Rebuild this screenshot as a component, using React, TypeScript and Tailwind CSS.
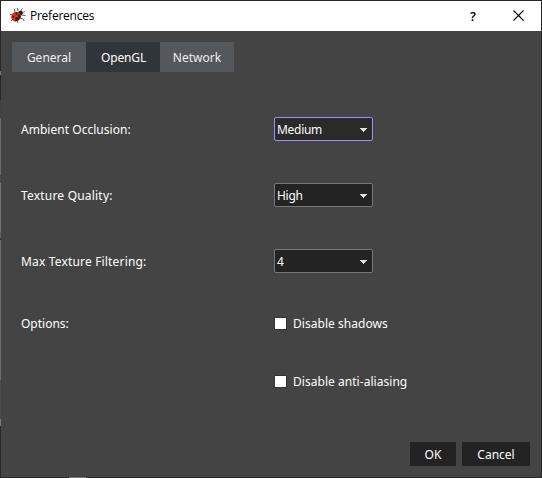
import React from 'react';

const edge: [string, number][] = [
  ['#2b2829', 71], ['#777777', 4], ['#292829', 25], ['#414142', 18], ['#6b6b6b', 57], ['#4b4b4b', 8],
  ['#747474', 49], ['#74567a', 6], ['#302c38', 2], ['#6d6d6d', 140], ['#4b4b4b', 39], ['#7a7a7a', 7], ['#29282a', 52],
];

function Ladybug() {
  return (
    <svg width="18" height="18" viewBox="0 0 18 18" className="shrink-0">
      <g stroke="#555" strokeWidth="0.9" fill="none">
        <path d="M6 6 5.5 2M9 4 8.5 1M12 4 13 1.5M13 6 16 4.5M12 8 16.5 8.5M11 11 14 12 15 14M8 13 9 16M4 8 1 7.5M4 12 2 14" />
      </g>
      <circle cx="11.5" cy="6" r="2.3" fill="#211c1b" />
      <ellipse cx="7" cy="9.7" rx="5" ry="4.6" transform="rotate(-42 7 9.7)" fill="#d0301c" />
      <path d="M5.5 14.2Q10 14.5 12 9L10.5 8.5Z" fill="#4a1710" />
      <circle cx="7.5" cy="6.6" r="1" fill="#371515" />
      <circle cx="4.3" cy="9.6" r=".9" fill="#371515" />
      <circle cx="7.5" cy="11.3" r="1.1" fill="#281312" />
      <circle cx="10" cy="8.5" r="1.1" fill="#281312" />
    </svg>
  );
}

function Tab({ label, active = false }: { label: string; active?: boolean }) {
  return (
    <button className={`flex h-[30px] w-[74px] items-center justify-center whitespace-nowrap pt-px ${active ? 'bg-[#31363b] pl-px tracking-[-0.15px] text-white' : 'bg-[#54575b] text-[#eff0f1]'}`}>
      {label}
    </button>
  );
}

function Select({ value, focused = false }: { value: string; focused?: boolean }) {
  return (
    <button className={`flex h-6 w-[99px] items-center justify-between rounded-[2px] border pl-[2px] pr-[5px] text-white ${focused ? 'border-[#9a8fff] bg-[#2a2a2a]' : 'border-[#76797c] bg-[#232323]'}`}>
      <span className="pt-[2px] tracking-[-0.3px]">{value}</span>
      <svg width="7" height="4" viewBox="0 0 7 4" className="mt-px" shapeRendering="crispEdges"><path d="M0 0H7V1H6V2H5V3H4V4H3V3H2V2H1V1H0Z" fill="#dedede" /></svg>
    </button>
  );
}

function Check({ label }: { label: string }) {
  return (
    <label className="flex h-[18px] items-center">
      <span className="-mt-px h-[13px] w-[13px] shrink-0 border border-[#333] bg-white" />
      <span className="ml-[6px] whitespace-nowrap tracking-[0.04px]">{label}</span>
    </label>
  );
}

export default function App() {
  return (
    <div className="flex h-[478px] w-[542px] overflow-hidden bg-[#2a2527] font-['Noto_Sans',sans-serif] text-[12px] leading-[18px] text-white">
      <div className="flex w-px shrink-0 flex-col">
        {edge.map(([c, h], i) => <div key={i} className="w-px shrink-0" style={{ background: c, height: h }} />)}
      </div>
      <div className="flex w-[540px] flex-col pt-px">
        <header className="flex h-[30px] shrink-0 items-center bg-white pl-2 text-black">
          <Ladybug />
          <span className="ml-[3px] font-['Open_Sans',sans-serif] text-[12px] tracking-[-0.25px]">Preferences</span>
          <span className="-mt-px ml-auto w-3 text-center font-['Open_Sans',sans-serif] text-[13px] font-semibold">?</span>
          <svg width="11" height="11" viewBox="0 0 11 11" className="-mt-[2px] ml-[34px] mr-[17px]"><path d="M.5.5 10.5 10.5M10.5.5.5 10.5" stroke="#000" strokeWidth="1.1" /></svg>
        </header>
        <main className="flex h-[446px] flex-col bg-[#444] pt-[11px]">
          <nav className="flex pl-[11px]">
            <Tab label="General" />
            <Tab label="OpenGL" active />
            <Tab label="Network" />
          </nav>
          <section className="mt-[45px] grid grid-cols-[253px_1fr] gap-y-[42px] pl-5">
            <div className="flex h-6 items-center pt-px tracking-[0.03px]">Ambient Occlusion:</div>
            <Select value="Medium" focused />
            <div className="flex h-6 items-center pt-px tracking-[0.2px]">Texture Quality:</div>
            <Select value="High" />
            <div className="flex h-6 items-center pt-px tracking-[0.17px]">Max Texture Filtering:</div>
            <Select value="4" />
          </section>
          <section className="mt-[42px] grid grid-cols-[253px_1fr] pl-5">
            <div>Options:</div>
            <div className="flex flex-col gap-10">
              <Check label="Disable shadows" />
              <Check label="Disable anti-aliasing" />
            </div>
          </section>
          <footer className="mb-[11px] mr-[11px] mt-auto flex justify-end gap-[6px]">
            <button className="h-6 w-[46px] bg-[#232323] pt-px">OK</button>
            <button className="h-6 w-[68px] bg-[#232323] pt-px">Cancel</button>
          </footer>
        </main>
        <div className="flex h-px bg-[#29282a] pl-[68px]"><div className="h-px w-[17px] bg-[#777]" /></div>
      </div>
    </div>
  );
}
